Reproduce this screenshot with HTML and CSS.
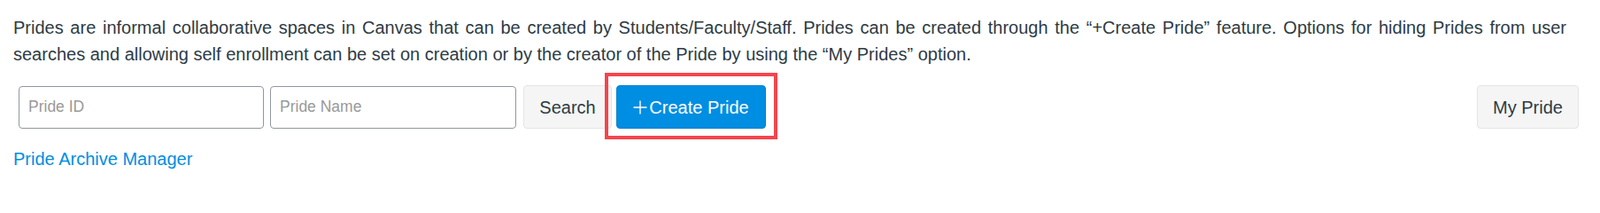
FILE: index.html
```html
<!DOCTYPE html>
<html lang="en">
<head>
<meta charset="utf-8">
<title>Prides</title>
<link rel="stylesheet" href="styles.css">
</head>
<body>
<div class="page">
  <p class="intro">Prides are informal collaborative spaces in Canvas that can be created by Students/Faculty/Staff. Prides can be created through the “+Create Pride” feature. Options for hiding Prides from user searches and allowing self enrollment can be set on creation or by the creator of the Pride by using the “My Prides” option.</p>
  <div class="toolbar">
    <input class="field field-id" type="text" placeholder="Pride ID">
    <input class="field field-name" type="text" placeholder="Pride Name">
    <button class="btn btn-default btn-search" type="button">Search</button>
    <div class="highlight-wrap">
      <button class="btn btn-primary btn-create" type="button"><svg class="plus" viewBox="0 0 16 16" width="16" height="16" aria-hidden="true"><path d="M8 0.5V15.5M0.5 8H15.5" stroke="#ffffff" stroke-width="1.4" fill="none"/></svg>Create Pride</button>
      <span class="highlight"></span>
    </div>
    <button class="btn btn-default btn-mine" type="button">My Pride</button>
  </div>
  <a class="archive-link" href="#">Pride Archive Manager</a>
</div>
</body>
</html>
```

FILE: styles.css
```css
html, body {
  margin: 0;
  padding: 0;
  background: #ffffff;
}

body {
  font-family: "Liberation Sans", Arial, sans-serif;
  color: #2d3b45;
}

.page {
  padding: 16px 24px 0 15px;
}

.intro {
  margin: 0;
  padding-right: 14px;
  font-size: 20px;
  line-height: 30px;
  text-align: justify;
}

.toolbar {
  display: flex;
  align-items: center;
  margin-top: 20px;
  padding-left: 6px;
  height: 49px;
}

.field {
  box-sizing: border-box;
  height: 48px;
  border: 1px solid #8f979f;
  border-radius: 4px;
  padding: 0 10px;
  font-family: "Liberation Sans", Arial, sans-serif;
  font-size: 17.5px;
  color: #2d3b45;
  background: #ffffff;
  outline: none;
}

.field::placeholder {
  color: #999999;
}

.field-id {
  width: 277px;
}

.field-name {
  width: 278px;
  margin-left: 7px;
}

.btn {
  box-sizing: border-box;
  height: 49px;
  border-radius: 4px;
  font-family: "Liberation Sans", Arial, sans-serif;
  font-size: 20px;
  line-height: 1;
  display: inline-flex;
  align-items: center;
  justify-content: center;
  cursor: pointer;
}

.btn-default {
  background: #f5f5f5;
  border: 1px solid #e3e5e6;
  color: #2d3b45;
}

.btn-search {
  width: 100px;
  margin-left: 8px;
}

.highlight-wrap {
  position: relative;
  margin-left: 5px;
  display: flex;
}

.btn-primary {
  background: #008ee2;
  border: 1px solid #0080cc;
  color: #ffffff;
}

.btn-create {
  width: 169px;
  padding: 0;
}

.plus {
  display: block;
  margin-right: 2px;
}

.highlight {
  position: absolute;
  left: -13px;
  right: -13px;
  top: -14px;
  bottom: -12px;
  border: 4px solid #f4454b;
  pointer-events: none;
}

.btn-mine {
  width: 115px;
  margin-left: auto;
}

.archive-link {
  display: inline-block;
  margin-top: 19px;
  font-size: 20px;
  line-height: 30px;
  color: #008ee2;
  text-decoration: none;
}
```
